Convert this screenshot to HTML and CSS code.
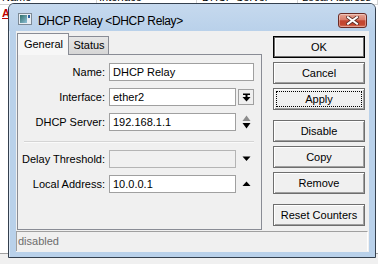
FILE: index.html
```html
<!DOCTYPE html>
<html>
<head>
<meta charset="utf-8">
<link rel="stylesheet" href="styles.css">
</head>
<body>
<div class="desk">
  <div class="list">
    <div class="thead">
      <span class="th c-name">Name</span>
      <span class="th c-if">Interface</span>
      <span class="th c-srv">DHCP Server</span>
      <span class="th c-loc">Local Address</span>
    </div>
    <div class="lrow"><span class="mark">A</span></div>
  </div>
  <div class="foot"></div>
</div>

<div class="win">
  <div class="titlebar">
    <svg class="appicon" width="14" height="12" viewBox="0 0 14 12">
      <defs>
        <linearGradient id="g1" x1="0" y1="0" x2="1" y2="1">
          <stop offset="0" stop-color="#2f6f6a"/>
          <stop offset="1" stop-color="#8fc0d8"/>
        </linearGradient>
      </defs>
      <rect x="0.5" y="0.5" width="13" height="11" fill="#e8eef4" stroke="#7d8a96"/>
      <rect x="2" y="2" width="7" height="8" fill="url(#g1)"/>
      <rect x="10" y="2" width="2" height="3" fill="#2a5f9e"/>
    </svg>
    <span class="title">DHCP Relay &lt;DHCP Relay&gt;</span>
    <span class="close">
      <svg width="13" height="9" viewBox="0 0 13 9">
        <path d="M2 1.2 L11 7.8 M11 1.2 L2 7.8" stroke="#5a2a24" stroke-width="3.6" stroke-linecap="square"/>
        <path d="M2 1.2 L11 7.8 M11 1.2 L2 7.8" stroke="#ffffff" stroke-width="2" stroke-linecap="square"/>
      </svg>
    </span>
  </div>
  <div class="frame">
    <div class="client">
      <div class="main">
        <div class="tabs">
          <div class="tabbar">
            <span class="tab sel">General</span>
            <span class="tab">Status</span>
          </div>
          <div class="panel">
            <div class="row">
              <span class="lbl">Name:</span>
              <span class="inp wide">DHCP Relay</span>
            </div>
            <div class="row">
              <span class="lbl">Interface:</span>
              <span class="inp">ether2</span>
              <span class="ctl">
                <span class="dd">
                  <svg width="9" height="9" viewBox="0 0 9 9">
                    <rect x="1" y="0.5" width="7" height="1.5" fill="#000"/>
                    <rect x="3.5" y="2" width="2" height="2" fill="#000"/>
                    <polygon points="0.5,4 8.5,4 4.5,8.5" fill="#000"/>
                  </svg>
                </span>
              </span>
            </div>
            <div class="row">
              <span class="lbl">DHCP Server:</span>
              <span class="inp">192.168.1.1</span>
              <span class="ctl">
                <svg width="9" height="14" viewBox="0 0 9 14">
                  <polygon points="4.5,0.5 8.5,6 0.5,6" fill="#8c8c8c"/>
                  <polygon points="0.5,8 8.5,8 4.5,13.5" fill="#000"/>
                </svg>
              </span>
            </div>
            <div class="sep"></div>
            <div class="row">
              <span class="lbl">Delay Threshold:</span>
              <span class="inp off"></span>
              <span class="ctl">
                <svg width="9" height="6" viewBox="0 0 9 6">
                  <polygon points="0.5,0.5 8.5,0.5 4.5,5" fill="#000"/>
                </svg>
              </span>
            </div>
            <div class="row">
              <span class="lbl">Local Address:</span>
              <span class="inp">10.0.0.1</span>
              <span class="ctl">
                <svg width="9" height="6" viewBox="0 0 9 6">
                  <polygon points="4.5,0.5 8.5,5 0.5,5" fill="#000"/>
                </svg>
              </span>
            </div>
          </div>
        </div>
        <div class="buttons">
          <div class="group">
            <span class="btn def">OK</span>
            <span class="btn">Cancel</span>
            <span class="btn focus">Apply</span>
          </div>
          <div class="group">
            <span class="btn">Disable</span>
            <span class="btn">Copy</span>
            <span class="btn">Remove</span>
          </div>
          <div class="group">
            <span class="btn">Reset Counters</span>
          </div>
        </div>
      </div>
      <div class="status">disabled</div>
    </div>
  </div>
</div>
</body>
</html>
```

FILE: styles.css
```css
html, body {
  margin: 0;
  padding: 0;
}
body {
  width: 378px;
  height: 264px;
  overflow: hidden;
  position: relative;
  font-family: "Liberation Sans", Arial, sans-serif;
  font-size: 11px;
  color: #000;
  background: #f0f0f0;
}

/* background list behind the window */
.desk {
  display: flex;
  flex-direction: column;
  height: 264px;
}
.list {
  height: 253px;
  background: #fff;
  border-bottom: 1px solid #a0a0a0;
  overflow: hidden;
}
.thead {
  display: flex;
  height: 14px;
  margin-top: -10px;
  border-bottom: 1px solid #d5d5d5;
}
.th {
  box-sizing: border-box;
  padding-left: 2px;
  line-height: 14px;
  border-right: 1px solid #d5d5d5;
  color: #000;
}
.c-name { width: 97px; }
.c-if { width: 100px; }
.c-srv { width: 101px; padding-left: 5px; }
.c-loc { width: 80px; padding-left: 4px; }
.lrow {
  height: 14px;
  padding-left: 2px;
  margin-top: 1px;
}
.mark {
  color: #c00000;
  font-weight: bold;
  text-decoration: underline;
  line-height: 14px;
}
.foot {
  flex: 1;
  background: #f0f0f0;
}

/* window */
.win {
  position: absolute;
  left: 8px;
  top: 3px;
  width: 368px;
  height: 255px;
  box-sizing: border-box;
  border: 1px solid #34404e;
  border-radius: 6px 6px 0 0;
  background: #b9d1ea;
  box-shadow: inset 1px 1px 0 #dce8f5;
  display: flex;
  flex-direction: column;
}
.titlebar {
  height: 27px;
  display: flex;
  align-items: flex-start;
  padding-left: 9px;
  background: linear-gradient(#c6d9ee, #b9d1ea);
  border-radius: 5px 5px 0 0;
}
.appicon {
  margin-top: 9px;
  flex: none;
}
.title {
  margin-left: 6px;
  margin-top: 10px;
  font-size: 12px;
  line-height: 14px;
  letter-spacing: -0.35px;
  color: #000;
}
.close {
  margin-left: auto;
  margin-right: 8px;
  margin-top: 9px;
  width: 29px;
  height: 15px;
  box-sizing: border-box;
  border: 1px solid #6a2b25;
  border-radius: 3px;
  background: linear-gradient(#e6a697 0%, #d97c6a 45%, #c2442f 52%, #c4472f 80%, #d8745c 100%);
  box-shadow: inset 0 0 0 1px rgba(255,255,255,0.35);
  display: flex;
  align-items: center;
  justify-content: center;
}
.frame {
  flex: 1;
  display: flex;
  padding: 0 6px 5px 7px;
}
.client {
  flex: 1;
  background: #f0f0f0;
  display: flex;
  flex-direction: column;
}
.main {
  height: 200px;
  display: flex;
  padding-left: 1px;
}

/* tabs */
.tabs {
  width: 245px;
  padding-top: 2px;
  display: flex;
  flex-direction: column;
}
.tabbar {
  height: 21px;
  display: flex;
  align-items: flex-end;
}
.tab {
  box-sizing: border-box;
  height: 18px;
  width: 41px;
  border: 1px solid #898c95;
  border-bottom: none;
  background: linear-gradient(#e6e6e6, #d6d6d6);
  text-align: center;
  line-height: 17px;
  padding-left: 1px;
}
.tab.sel {
  width: 52px;
  height: 22px;
  margin-bottom: -1px;
  margin-right: -1px;
  background: #f7f7f7;
  line-height: 19px;
  position: relative;
  z-index: 1;
  padding-top: 1px;
}
.panel {
  height: 176px;
  box-sizing: border-box;
  border: 1px solid #898c95;
  background: #f0f0f0;
  padding-top: 8px;
  display: flex;
  flex-direction: column;
  gap: 7px;
}
.row {
  display: flex;
  align-items: center;
  height: 18px;
}
.lbl {
  width: 87px;
  text-align: right;
  flex: none;
}
.inp {
  margin-left: 4px;
  width: 127px;
  height: 18px;
  box-sizing: border-box;
  border: 1px solid #a0a0a0;
  background: #fff;
  padding-left: 3px;
  line-height: 16px;
  white-space: nowrap;
  flex: none;
}
.inp.wide { width: 145px; }
.inp.off {
  background: #f0f0f0;
  border-color: #b4b4b4;
}
.ctl {
  width: 18px;
  display: flex;
  justify-content: center;
  align-items: center;
  padding-left: 1px;
}
.dd {
  width: 16px;
  height: 16px;
  box-sizing: border-box;
  border: 1px solid #a0a0a0;
  display: flex;
  align-items: center;
  justify-content: center;
}
.sep {
  margin: 3px 0 0 6px;
  width: 230px;
  height: 1px;
  background: #d5d5d5;
  border-bottom: 1px solid #fafafa;
}

/* buttons */
.buttons {
  margin-left: 11px;
  width: 92px;
  padding-top: 5px;
  display: flex;
  flex-direction: column;
  gap: 10px;
}
.group {
  display: flex;
  flex-direction: column;
  gap: 4px;
}
.btn {
  height: 22px;
  box-sizing: border-box;
  border: 1px solid #6e6e6e;
  background: #f0f0f0;
  box-shadow: inset 1px 1px 0 #ffffff, inset -1px -1px 0 #a0a0a0;
  text-align: center;
  line-height: 20px;
}
.btn.def {
  border-color: #000;
  box-shadow: inset 0 0 0 1px #6e6e6e, inset 2px 2px 0 #ffffff;
}
.btn.focus {
  outline: 1px dotted #000;
  outline-offset: -4px;
}

/* status bar */
.status {
  height: 20px;
  box-sizing: border-box;
  margin-right: 1px;
  border-top: 1px solid #a0a0a0;
  border-left: 1px solid #a0a0a0;
  border-right: 1px solid #ffffff;
  padding-left: 1px;
  line-height: 19px;
  color: #6d6d6d;
}
```
